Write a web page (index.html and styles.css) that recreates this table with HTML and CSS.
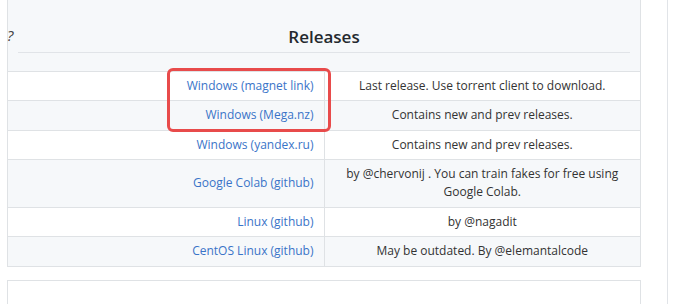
FILE: index.html
```html
<!DOCTYPE html>
<html lang="en">
<head>
    <meta charset="UTF-8">
    <meta name="viewport" content="width=device-width, initial-scale=1.0">
    <title>Releases</title>
    <link rel="stylesheet" href="styles.css">
</head>
<body>
    <div class="page">
        <div class="readme">
            <table class="releases">
                <tr class="head-row">
                    <th colspan="2">
                        <span class="cut-glyph">?</span>
                        <h2>Releases</h2>
                    </th>
                </tr>
                <tr>
                    <td class="link-cell"><a href="#">Windows (magnet link)</a></td>
                    <td>Last release. Use torrent client to download.</td>
                </tr>
                <tr>
                    <td class="link-cell"><a href="#">Windows (Mega.nz)</a></td>
                    <td>Contains new and prev releases.</td>
                </tr>
                <tr>
                    <td class="link-cell"><a href="#">Windows (yandex.ru)</a></td>
                    <td>Contains new and prev releases.</td>
                </tr>
                <tr>
                    <td class="link-cell"><a href="#">Google Colab (github)</a></td>
                    <td>by @chervonij . You can train fakes for free using Google Colab.</td>
                </tr>
                <tr>
                    <td class="link-cell"><a href="#">Linux (github)</a></td>
                    <td>by @nagadit</td>
                </tr>
                <tr>
                    <td class="link-cell"><a href="#">CentOS Linux (github)</a></td>
                    <td>May be outdated. By @elemantalcode</td>
                </tr>
            </table>

            <!-- hand drawn highlight over the windows links -->
            <div class="highlight"></div>

            <div class="next-box"></div>
        </div>
        <div class="sidebar"></div>
    </div>
</body>
</html>
```

FILE: styles.css
```css
body {
    font-family: "Open Sans", "Noto Sans", sans-serif;
    margin: 0;
    padding: 0;
    background-color: #fff;
    color: #333;
    font-size: 12px;
    overflow: hidden;
}

.page {
    display: flex;
    height: 304px;
    overflow: hidden;
}

.readme {
    position: relative;
    width: 634px;
    margin-left: 7px;
}

.releases {
    width: 634px;
    border-collapse: collapse;
    table-layout: fixed;
}

.releases td,
.releases th {
    border: 1px solid #dfe2e5;
    padding: 5px 13px 5px 13px;
    line-height: 18px;
    text-align: center;
}

.releases tr:nth-child(odd) {
    background-color: #f6f8fa;
}

.releases tr:nth-child(odd) td {
    padding-bottom: 6px;
}

.head-row th {
    position: relative;
    border-top: none;
    padding: 25px 10px 18px 10px;
    font-weight: normal;
}

.head-row h2 {
    margin: 0;
    padding-bottom: 3px;
    border-bottom: 1px solid #e1e4e8;
    font-size: 17px;
    font-weight: 600;
    line-height: 24px;
    color: #24292e;
}

.cut-glyph {
    position: absolute;
    left: -1px;
    top: 27px;
    font-size: 15px;
    font-style: italic;
    color: #444;
    line-height: 16px;
}

.releases td.link-cell {
    text-align: right;
    padding-right: 10px;
}

.link-cell a {
    color: #3a74c8;
    text-decoration: none;
}

.highlight {
    position: absolute;
    left: 160px;
    top: 68px;
    width: 158px;
    height: 58px;
    border: 3px solid #e84b4b;
    border-radius: 6px;
}

.next-box {
    margin-top: 13px;
    height: 24px;
    border: 1px solid #dfe2e5;
    border-bottom: none;
}

.sidebar {
    margin-left: 26px;
    border-left: 1px solid #e1e4e8;
    flex: 1;
}
```
